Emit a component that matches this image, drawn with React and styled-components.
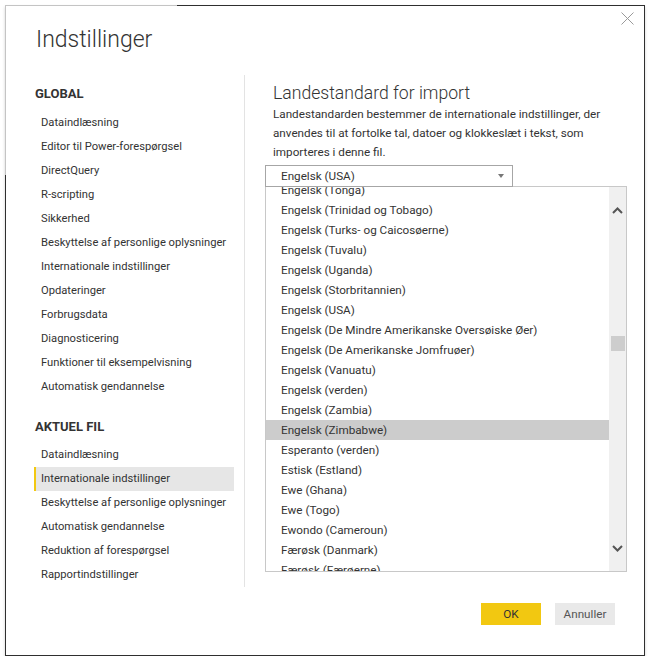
import React from 'react';
import styled, { createGlobalStyle } from 'styled-components';

const GlobalStyle = createGlobalStyle`
  html, body { margin: 0; padding: 0; background: #fff; }
  body {
    font-family: Roboto, "Open Sans", "Liberation Sans", sans-serif;
    color: #333;
  }
`;

const Dialog = styled.div`
  position: relative;
  box-sizing: border-box;
  margin: 5px 0 0 5px;
  width: 640px;
  height: 651px;
  border: 1px solid #2f2f2f;
  background: #fff;
  box-shadow: 0 2px 3px rgba(0, 0, 0, 0.18);
  display: flex;
  flex-direction: column;
  &::before {
    content: '';
    position: absolute;
    top: -1px;
    left: -1px;
    width: 172px;
    height: 1px;
    background: #c4c4c4;
  }
  &::after {
    content: '';
    position: absolute;
    top: -1px;
    left: -1px;
    width: 1px;
    height: 170px;
    background: #c4c4c4;
  }
`;

const CloseButton = styled.button`
  position: absolute;
  top: 6px;
  right: 10px;
  width: 13px;
  height: 13px;
  padding: 0;
  border: 0;
  background: transparent;
  display: flex;
`;

const Title = styled.h1`
  margin: 18px 0 0 30px;
  font-size: 23px;
  font-weight: 300;
  line-height: 32px;
  color: #333;
  height: 32px;
`;

const Body = styled.div`
  margin-top: 19px;
  display: grid;
  grid-template-columns: 239px 1fr;
  height: 512px;
`;

const Nav = styled.nav`
  border-right: 1px solid #e3e3e3;
  padding: 8px 0 0 28px;
`;

const NavHeading = styled.div`
  margin: ${(p) => (p.$first ? '0' : '17px')} 0 ${(p) => (p.$first ? '6px' : '5px')} 1px;
  font-size: 13px;
  font-weight: 700;
  line-height: 22px;
  color: #333;
`;

const NavItem = styled.div`
  box-sizing: border-box;
  width: 200px;
  height: 24px;
  line-height: 24px;
  padding-left: 5px;
  border-left: 2px solid ${(p) => (p.$active ? '#f2c811' : 'transparent')};
  background: ${(p) => (p.$active ? '#e6e6e6' : 'transparent')};
  font-size: 11.2px;
  color: #333;
  white-space: nowrap;
`;

const Content = styled.section`
  padding: 6px 0 0 20px;
  display: flex;
  flex-direction: column;
`;

const SectionTitle = styled.h2`
  margin: 0 0 0 8px;
  font-size: 17.6px;
  font-weight: 300;
  line-height: 24px;
  color: #333;
`;

const Description = styled.p`
  margin: 0 0 3px 8px;
  width: 332px;
  font-size: 11.7px;
  line-height: 19px;
  color: #333;
`;

const Select = styled.div`
  position: relative;
  z-index: 1;
  box-sizing: border-box;
  width: 248px;
  height: 22px;
  border: 1px solid #a6a6a6;
  background: #fff;
  display: flex;
  align-items: center;
  justify-content: space-between;
  padding: 0 8px 0 15px;
  font-size: 11.7px;
  color: #333;
`;

const Caret = styled.span`
  width: 0;
  height: 0;
  border-left: 3.5px solid transparent;
  border-right: 3.5px solid transparent;
  border-top: 4px solid #777;
`;

const ListBox = styled.div`
  box-sizing: border-box;
  margin-top: -1px;
  width: 362px;
  height: 386px;
  border: 1px solid #c8c8c8;
  display: flex;
  overflow: hidden;
`;

const Options = styled.ul`
  flex: 1;
  list-style: none;
  margin: -7px 0 0 0;
  padding: 0;
`;

const Option = styled.li`
  height: 20px;
  line-height: 20px;
  padding-left: 15px;
  font-size: 11.7px;
  color: #333;
  white-space: nowrap;
  background: ${(p) => (p.$selected ? '#cccccc' : 'transparent')};
`;

const Scrollbar = styled.div`
  width: 17px;
  background: #f0f0f0;
  display: flex;
  flex-direction: column;
`;

const ScrollArrow = styled.div`
  height: 46px;
  display: flex;
  align-items: center;
  justify-content: center;
`;

const Track = styled.div`
  flex: 1;
  padding-top: 103px;
  display: flex;
  justify-content: center;
`;

const Thumb = styled.div`
  width: 14px;
  height: 15px;
  background: #cdcdcd;
`;

const Footer = styled.div`
  display: flex;
  justify-content: flex-end;
  gap: 14px;
  padding: 16px 29px 0 0;
`;

const Button = styled.button`
  width: 60px;
  height: 22px;
  border: 0;
  padding: 0;
  font-family: inherit;
  font-size: 11.7px;
  color: ${(p) => (p.$primary ? '#333' : '#555')};
  background: ${(p) => (p.$primary ? '#f2c811' : '#e9e9e9')};
`;

const globalItems = [
  'Dataindlæsning',
  'Editor til Power-forespørgsel',
  'DirectQuery',
  'R-scripting',
  'Sikkerhed',
  'Beskyttelse af personlige oplysninger',
  'Internationale indstillinger',
  'Opdateringer',
  'Forbrugsdata',
  'Diagnosticering',
  'Funktioner til eksempelvisning',
  'Automatisk gendannelse',
];

const fileItems = [
  'Dataindlæsning',
  'Internationale indstillinger',
  'Beskyttelse af personlige oplysninger',
  'Automatisk gendannelse',
  'Reduktion af forespørgsel',
  'Rapportindstillinger',
];

const locales = [
  'Engelsk (Tonga)',
  'Engelsk (Trinidad og Tobago)',
  'Engelsk (Turks- og Caicosøerne)',
  'Engelsk (Tuvalu)',
  'Engelsk (Uganda)',
  'Engelsk (Storbritannien)',
  'Engelsk (USA)',
  'Engelsk (De Mindre Amerikanske Oversøiske Øer)',
  'Engelsk (De Amerikanske Jomfruøer)',
  'Engelsk (Vanuatu)',
  'Engelsk (verden)',
  'Engelsk (Zambia)',
  'Engelsk (Zimbabwe)',
  'Esperanto (verden)',
  'Estisk (Estland)',
  'Ewe (Ghana)',
  'Ewe (Togo)',
  'Ewondo (Cameroun)',
  'Færøsk (Danmark)',
  'Færøsk (Færøerne)',
];

const Chevron = ({ up }) => (
  <svg width="11" height="7" viewBox="0 0 11 7">
    <path
      d={up ? 'M1 6 L5.5 1.5 L10 6' : 'M1 1 L5.5 5.5 L10 1'}
      fill="none"
      stroke="#555"
      strokeWidth="2"
    />
  </svg>
);

export default function App() {
  return (
    <>
      <GlobalStyle />
      <Dialog>
        <CloseButton aria-label="Luk">
          <svg width="13" height="13" viewBox="0 0 13 13">
            <path d="M0.5 0.5 L12.5 12.5 M12.5 0.5 L0.5 12.5" stroke="#9a9a9a" strokeWidth="1" />
          </svg>
        </CloseButton>
        <Title>Indstillinger</Title>
        <Body>
          <Nav>
            <NavHeading $first>GLOBAL</NavHeading>
            {globalItems.map((t) => (
              <NavItem key={t}>{t}</NavItem>
            ))}
            <NavHeading>AKTUEL FIL</NavHeading>
            {fileItems.map((t, i) => (
              <NavItem key={t} $active={i === 1}>
                {t}
              </NavItem>
            ))}
          </Nav>
          <Content>
            <SectionTitle>Landestandard for import</SectionTitle>
            <Description>
              Landestandarden bestemmer de internationale indstillinger, der anvendes til at fortolke tal,
              datoer og klokkeslæt i tekst, som importeres i denne fil.
            </Description>
            <Select>
              <span>Engelsk (USA)</span>
              <Caret />
            </Select>
            <ListBox>
              <Options>
                {locales.map((l) => (
                  <Option key={l} $selected={l === 'Engelsk (Zimbabwe)'}>
                    {l}
                  </Option>
                ))}
              </Options>
              <Scrollbar>
                <ScrollArrow>
                  <Chevron up />
                </ScrollArrow>
                <Track>
                  <Thumb />
                </Track>
                <ScrollArrow>
                  <Chevron />
                </ScrollArrow>
              </Scrollbar>
            </ListBox>
          </Content>
        </Body>
        <Footer>
          <Button $primary>OK</Button>
          <Button>Annuller</Button>
        </Footer>
      </Dialog>
    </>
  );
}
